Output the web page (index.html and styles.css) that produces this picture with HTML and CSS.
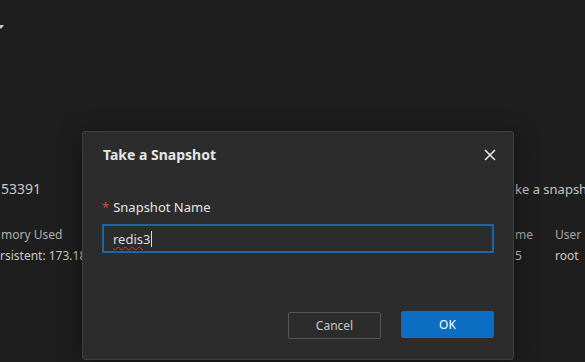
FILE: index.html
```html
<!DOCTYPE html>
<html lang="en">
<head>
    <meta charset="UTF-8">
    <meta name="viewport" content="width=device-width, initial-scale=1.0">
    <title>Take a Snapshot</title>
    <link rel="stylesheet" href="styles.css">
</head>
<body>
    <div class="page">
        <div class="topbar">
            <span class="caret-down"></span>
        </div>

        <div class="content">
            <div class="col-left">
                <div class="instance-id">53391</div>
                <div class="stat-label">mory Used</div>
                <div class="stat-value">rsistent: 173.18</div>
            </div>
            <div class="col-right">
                <div class="hint">ke a snapshot</div>
                <div class="table-row head">
                    <span class="cell">me</span>
                    <span class="cell">User</span>
                </div>
                <div class="table-row">
                    <span class="cell">5</span>
                    <span class="cell">root</span>
                </div>
            </div>
        </div>
    </div>

    <!-- Modal -->
    <div class="modal-mask">
        <div class="modal">
            <div class="modal-header">
                <h2 class="modal-title">Take a Snapshot</h2>
                <button class="modal-close" aria-label="Close">
                    <svg width="12" height="12" viewBox="0 0 12 12">
                        <path d="M1 1L11 11M11 1L1 11" stroke="#e8e8e8" stroke-width="1.6" fill="none"/>
                    </svg>
                </button>
            </div>

            <div class="modal-body">
                <label class="form-label"><span class="required">*</span>Snapshot Name</label>
                <div class="input-box">
                    <span class="input-text"><span class="misspelled">redis</span>3</span><span class="text-caret"></span>
                </div>
            </div>

            <div class="modal-footer">
                <button class="btn btn-cancel">Cancel</button>
                <button class="btn btn-ok">OK</button>
            </div>
        </div>
    </div>
</body>
</html>
```

FILE: styles.css
```css
:root {
    --bg: #1e1e1e;
    --panel: #2c2c2c;
    --border: #3f3f3f;
    --text: #e6e6e6;
    --muted: #a8a8a8;
    --blue: #0b6ec2;
    --focus: #1a66a8;
    --danger: #c9573b;
}

body {
    margin: 0;
    padding: 0;
    width: 585px;
    height: 362px;
    overflow: hidden;
    background: var(--bg);
    font-family: 'Noto Sans', 'Open Sans', sans-serif;
    color: var(--text);
    position: relative;
}

.page {
    display: flex;
    flex-direction: column;
    height: 100%;
}

.topbar {
    height: 52px;
    padding-top: 25px;
    box-sizing: border-box;
}

.caret-down {
    display: block;
    width: 0;
    height: 0;
    border-left: 3px solid transparent;
    border-right: 3px solid transparent;
    border-top: 4px solid #c8c8c8;
    margin-left: -2px;
}

.content {
    display: flex;
    justify-content: space-between;
    padding-top: 128px;
    white-space: nowrap;
}

.col-left {
    padding-left: 1px;
}

.instance-id {
    font-size: 14px;
    line-height: 20px;
    color: #c8c8c8;
    margin-top: -1px;
}

.stat-label {
    font-size: 12px;
    line-height: 18px;
    color: #b0b0b0;
    margin-top: 27px;
}

.stat-value {
    font-size: 12px;
    line-height: 18px;
    color: #c8c8c8;
    margin-top: 3px;
    margin-left: -1px;
}

.col-right {
    width: 70px;
}

.hint {
    font-size: 13px;
    line-height: 20px;
    color: #c4c4c4;
    margin-top: -1px;
}

.table-row {
    display: flex;
    font-size: 12px;
    line-height: 18px;
    color: #c8c8c8;
    margin-top: 3px;
}

.table-row.head {
    margin-top: 27px;
    color: #a8a8a8;
}

.table-row .cell:first-child {
    width: 40px;
}

/* Modal */
.modal-mask {
    position: absolute;
    inset: 0;
}

.modal {
    position: absolute;
    left: 82px;
    top: 131px;
    width: 432px;
    height: 229px;
    box-sizing: border-box;
    background: var(--panel);
    border: 1px solid var(--border);
    border-radius: 3px;
    padding: 0 19px 20px;
    display: flex;
    flex-direction: column;
    box-shadow: 0 4px 24px rgba(0, 0, 0, 0.45);
}

.modal-header {
    display: flex;
    justify-content: space-between;
    align-items: center;
    padding-top: 13px;
}

.modal-title {
    margin: 0 0 0 1px;
    font-size: 14px;
    line-height: 20px;
    font-weight: 700;
    color: var(--text);
}

.modal-close {
    background: none;
    border: none;
    padding: 0;
    width: 12px;
    height: 12px;
    margin-right: -2px;
    cursor: pointer;
    display: flex;
}

.modal-body {
    display: flex;
    flex-direction: column;
    margin-top: 33px;
}

.form-label {
    font-size: 13px;
    line-height: 18px;
    color: var(--text);
    display: flex;
    align-items: center;
}

.required {
    color: var(--danger);
    margin-right: 4px;
    font-size: 13px;
}

.input-box {
    margin-top: 8px;
    height: 29px;
    box-sizing: border-box;
    border: 2px solid var(--focus);
    border-radius: 1px;
    padding: 0 9px;
    display: flex;
    align-items: center;
    font-size: 13px;
    color: #dcdcdc;
}

.misspelled {
    text-decoration: underline wavy #c0462e;
    text-decoration-thickness: 1px;
    text-underline-offset: 2px;
}

.text-caret {
    width: 1px;
    height: 16px;
    background: #dcdcdc;
    margin-left: 1px;
}

.modal-footer {
    margin-top: auto;
    display: flex;
    justify-content: flex-end;
    gap: 20px;
}

.btn {
    width: 93px;
    height: 27px;
    box-sizing: border-box;
    font-family: inherit;
    font-size: 12px;
    border-radius: 2px;
    cursor: pointer;
}

.btn-cancel {
    background: transparent;
    border: 1px solid #555;
    color: #c8c8c8;
}

.btn-ok {
    background: var(--blue);
    border: 1px solid var(--blue);
    color: #fff;
    margin-top: -1px;
}
```
